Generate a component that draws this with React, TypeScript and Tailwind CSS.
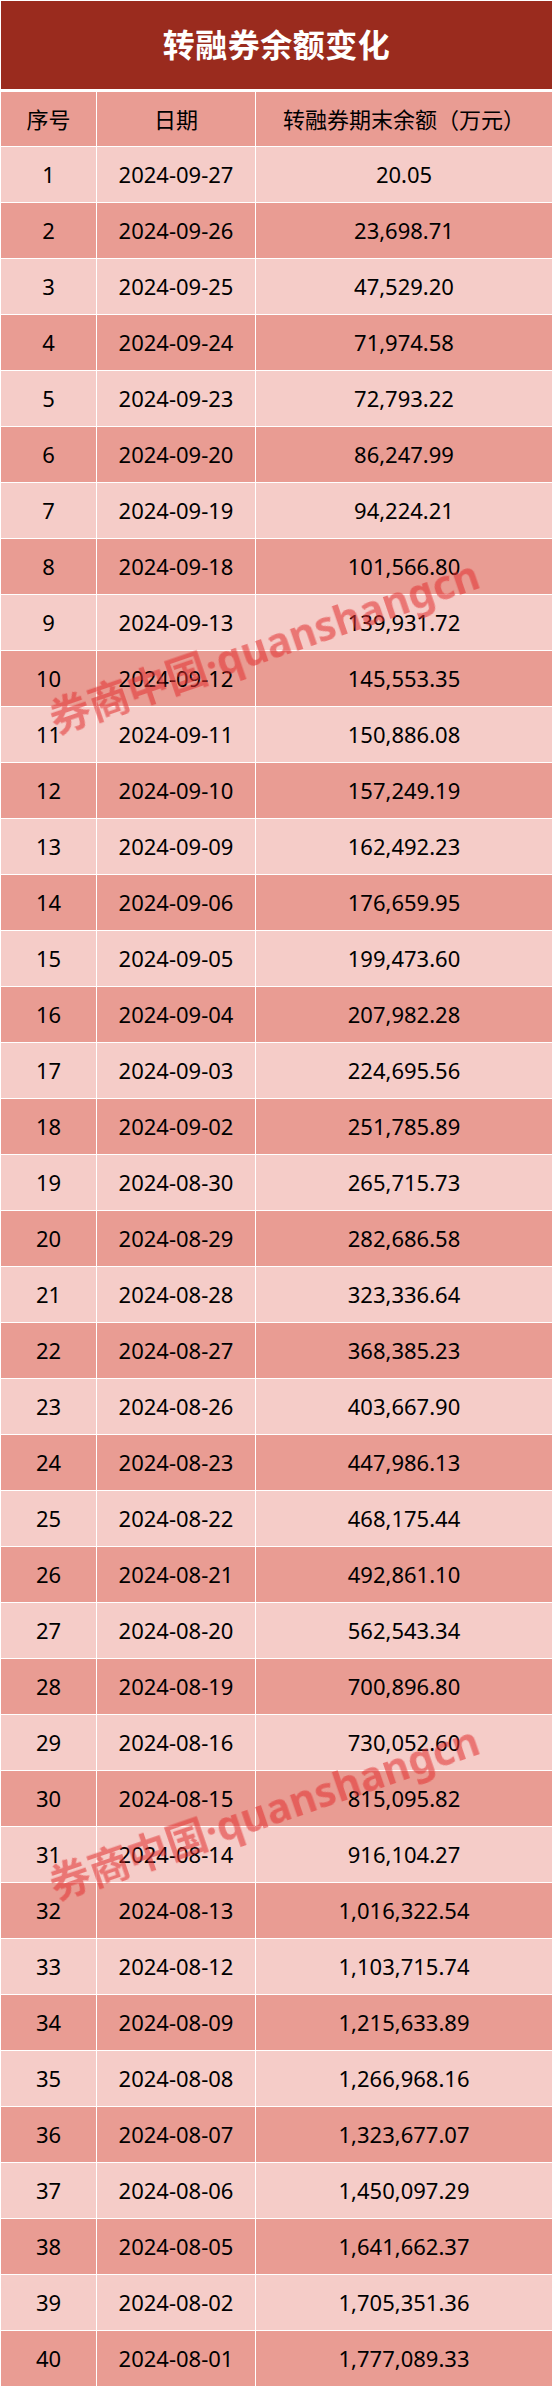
import React from 'react';

const ROWS: [string, string][] = [
  ['2024-09-27', '20.05'],
  ['2024-09-26', '23,698.71'],
  ['2024-09-25', '47,529.20'],
  ['2024-09-24', '71,974.58'],
  ['2024-09-23', '72,793.22'],
  ['2024-09-20', '86,247.99'],
  ['2024-09-19', '94,224.21'],
  ['2024-09-18', '101,566.80'],
  ['2024-09-13', '139,931.72'],
  ['2024-09-12', '145,553.35'],
  ['2024-09-11', '150,886.08'],
  ['2024-09-10', '157,249.19'],
  ['2024-09-09', '162,492.23'],
  ['2024-09-06', '176,659.95'],
  ['2024-09-05', '199,473.60'],
  ['2024-09-04', '207,982.28'],
  ['2024-09-03', '224,695.56'],
  ['2024-09-02', '251,785.89'],
  ['2024-08-30', '265,715.73'],
  ['2024-08-29', '282,686.58'],
  ['2024-08-28', '323,336.64'],
  ['2024-08-27', '368,385.23'],
  ['2024-08-26', '403,667.90'],
  ['2024-08-23', '447,986.13'],
  ['2024-08-22', '468,175.44'],
  ['2024-08-21', '492,861.10'],
  ['2024-08-20', '562,543.34'],
  ['2024-08-19', '700,896.80'],
  ['2024-08-16', '730,052.60'],
  ['2024-08-15', '815,095.82'],
  ['2024-08-14', '916,104.27'],
  ['2024-08-13', '1,016,322.54'],
  ['2024-08-12', '1,103,715.74'],
  ['2024-08-09', '1,215,633.89'],
  ['2024-08-08', '1,266,968.16'],
  ['2024-08-07', '1,323,677.07'],
  ['2024-08-06', '1,450,097.29'],
  ['2024-08-05', '1,641,662.37'],
  ['2024-08-02', '1,705,351.36'],
  ['2024-08-01', '1,777,089.33'],
];

const cell = 'flex items-center justify-center';

const Watermark: React.FC<{ top: string }> = ({ top }) => (
  <div
    className={`absolute left-[264px] ${top} -translate-x-1/2 -translate-y-1/2 -rotate-[19deg] whitespace-nowrap pointer-events-none text-[41px] font-bold leading-none text-[rgba(226,48,48,0.55)] blur-[0.6px]`}
  >
    券商中国·quanshangcn
  </div>
);

export default function App() {
  return (
    <div
      className="relative w-[554px] bg-white pt-px pl-px pr-[2px] pb-px text-black"
      style={{ fontFamily: '"Noto Sans", "Noto Sans CJK SC", sans-serif' }}
    >
      {/* Title */}
      <div className="h-[88px] bg-[#9a2b1e] flex items-center justify-center mb-[3px]">
        <h1 className="text-[32px] font-bold text-white tracking-[0.5px]">转融券余额变化</h1>
      </div>

      {/* Table */}
      <div className="grid grid-cols-[95px_158px_296px] gap-px text-[22px]">
        <div className={`${cell} h-[54px] bg-[#e99c93]`}>序号</div>
        <div className={`${cell} h-[54px] bg-[#e99c93]`}>日期</div>
        <div className={`${cell} h-[54px] bg-[#e99c93]`}>转融券期末余额（万元）</div>

        {ROWS.map(([date, amount], i) => {
          const bg = i % 2 === 0 ? 'bg-[#f5ccc8]' : 'bg-[#e99c93]';
          return (
            <React.Fragment key={date}>
              <div className={`${cell} h-[55px] ${bg}`}>{i + 1}</div>
              <div className={`${cell} h-[55px] ${bg}`}>{date}</div>
              <div className={`${cell} h-[55px] ${bg}`}>{amount}</div>
            </React.Fragment>
          );
        })}
      </div>

      <Watermark top="top-[646px]" />
      <Watermark top="top-[1812px]" />
    </div>
  );
}
